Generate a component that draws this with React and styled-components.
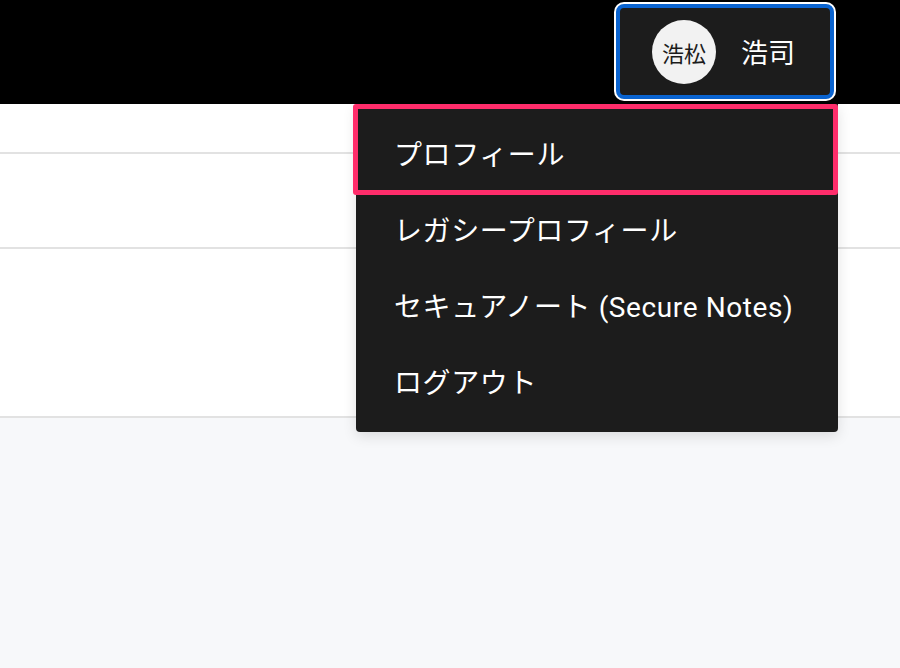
import React from 'react'
import styled, { createGlobalStyle } from 'styled-components'

const GlobalStyle = createGlobalStyle`
  html, body {
    margin: 0;
    padding: 0;
    background: #f7f8fa;
    font-family: Roboto, "Noto Sans CJK JP", sans-serif;
  }
`

const menuItems = ['プロフィール', 'レガシープロフィール', 'セキュアノート (Secure Notes)', 'ログアウト']

const App = () => {
  return (
    <>
      <GlobalStyle />
      <Page>
        <Header>
          <UserButton>
            <Avatar>浩松</Avatar>
            <UserName>浩司</UserName>
          </UserButton>
          <Menu>
            {menuItems.map((label, i) => (
              <MenuItem key={label} $active={i === 0}>{label}</MenuItem>
            ))}
          </Menu>
        </Header>
        <Content>
          <Row $height={48} />
          <Row $height={93} />
          <Row $height={167} />
        </Content>
      </Page>
    </>
  )
}

export default App

const Page = styled.div`
  width: 100%;
  min-height: 668px;
  background: #f7f8fa;
`
const Header = styled.div`
  position: relative;
  height: 104px;
  background: #000;
  display: flex;
  justify-content: flex-end;
  align-items: flex-start;
  padding: 4px 66px 0 0;
  box-sizing: border-box;
`
const UserButton = styled.div`
  width: 218px;
  height: 95px;
  box-sizing: border-box;
  background: #1c1c1c;
  border: 4px solid #0a64d1;
  border-radius: 8px;
  box-shadow: 0 0 0 2px #ffffff;
  display: flex;
  align-items: center;
  padding-left: 32px;
  gap: 25px;
`
const Avatar = styled.div`
  width: 64px;
  height: 64px;
  border-radius: 50%;
  background: #f2f2f2;
  color: #1c1c1c;
  font-size: 22px;
  display: flex;
  align-items: center;
  justify-content: center;
  flex-shrink: 0;
`
const UserName = styled.div`
  color: #ffffff;
  font-size: 27px;
`
const Menu = styled.div`
  position: absolute;
  top: 104px;
  right: 62px;
  width: 482px;
  background: #1c1c1c;
  border-radius: 0 0 4px 4px;
  box-shadow: 0 4px 14px rgba(0, 0, 0, 0.12);
  padding: 11px 0 13px;
  z-index: 10;
`
const MenuItem = styled.div`
  position: relative;
  height: 76px;
  display: flex;
  align-items: center;
  padding-left: 38px;
  color: #ffffff;
  font-size: 28px;
  letter-spacing: 0.6px;
  white-space: nowrap;

  ${p => p.$active && `
    &::after {
      content: '';
      position: absolute;
      top: -11px;
      left: -3px;
      right: 0;
      bottom: -4px;
      border: 5px solid #ff2d6b;
      border-radius: 3px;
    }
  `}
`
const Content = styled.div`
  background: #ffffff;
`
const Row = styled.div`
  height: ${p => p.$height}px;
  border-bottom: 2px solid #e2e2e2;
`
